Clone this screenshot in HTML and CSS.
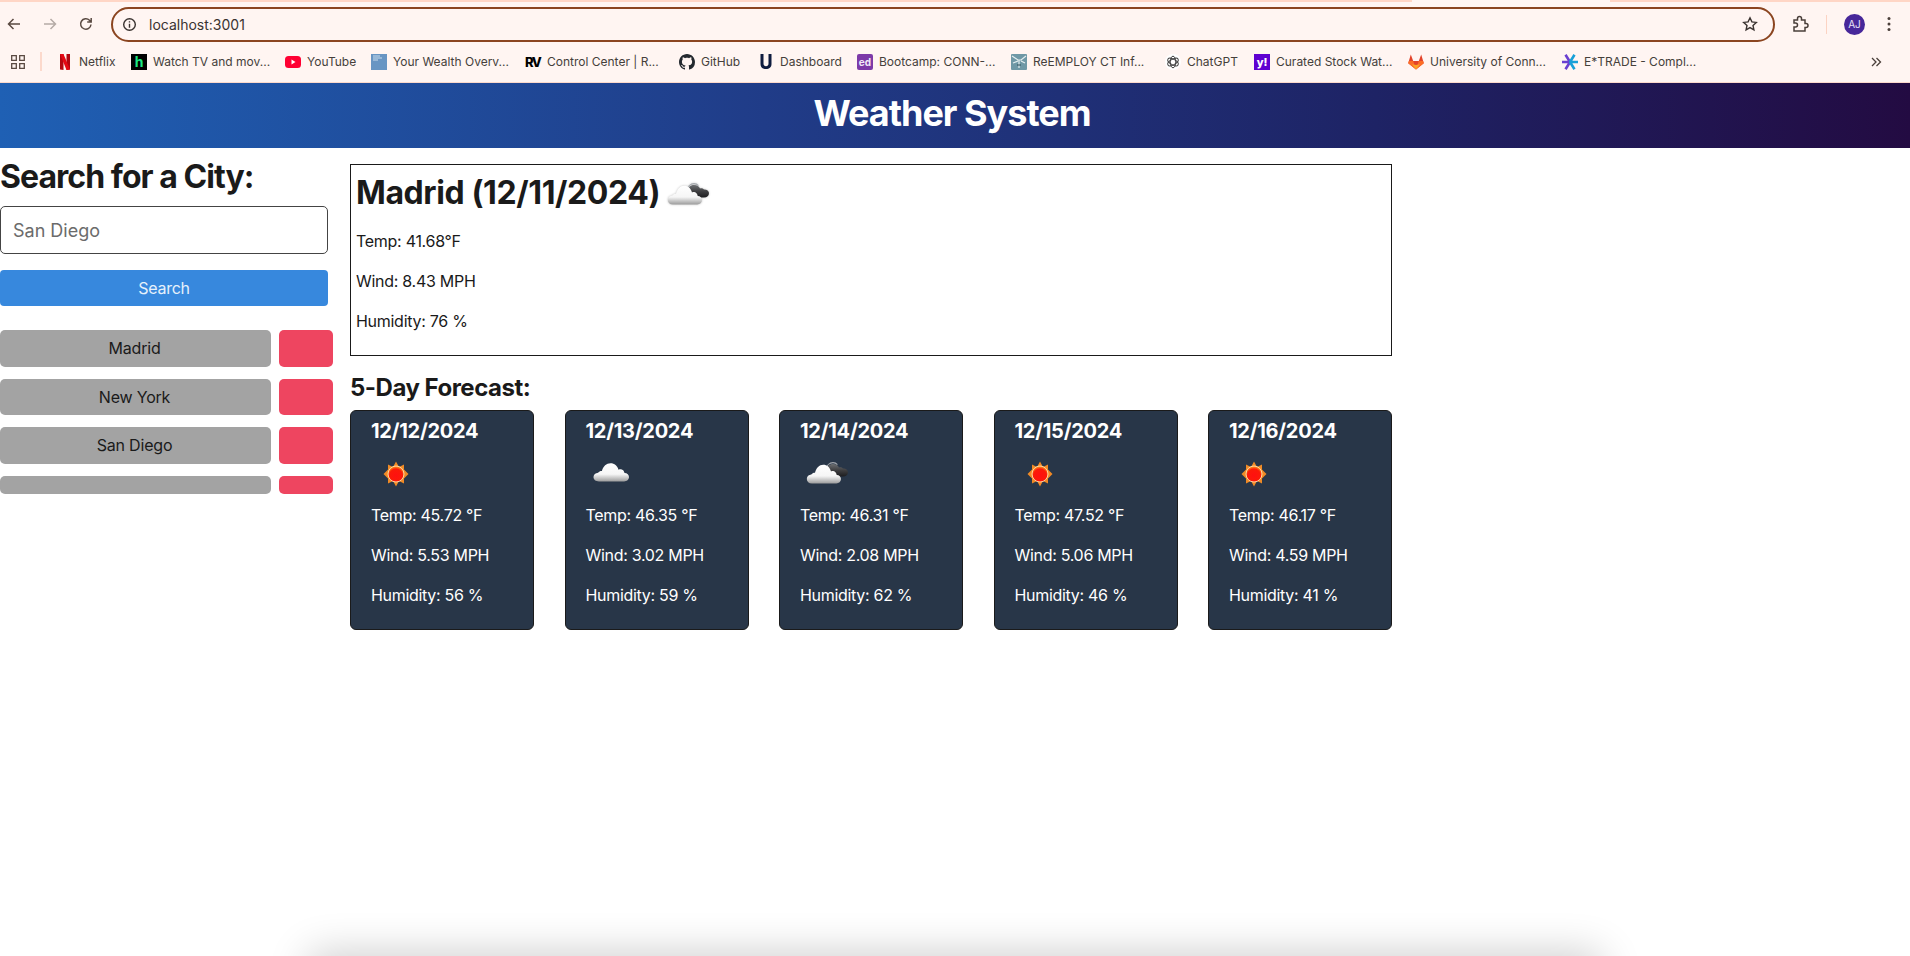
FILE: index.html
```html
<!DOCTYPE html>
<html lang="en">
<head>
    <meta charset="UTF-8" />
    <meta name="viewport" content="width=device-width, initial-scale=1" />
    <title>Weather System</title>
    <link rel="stylesheet" href="styles.css">
</head>
<body>
    <svg class="defs" aria-hidden="true">
        <defs>
            <linearGradient id="whiteCloud" x1="0" y1="0" x2="0" y2="1">
                <stop offset="0" stop-color="#ffffff" />
                <stop offset="0.6" stop-color="#f6f6f6" />
                <stop offset="1" stop-color="#9c9c9c" />
            </linearGradient>
            <linearGradient id="darkCloud" x1="0" y1="0" x2="0" y2="1">
                <stop offset="0" stop-color="#6d6f72" />
                <stop offset="0.5" stop-color="#3f3f41" />
                <stop offset="1" stop-color="#1d1d1f" />
            </linearGradient>
            <radialGradient id="sunDisc" cx="0.5" cy="0.6" r="0.55">
                <stop offset="0" stop-color="#ff1010" />
                <stop offset="0.75" stop-color="#fb1a08" />
                <stop offset="1" stop-color="#ff8a1a" />
            </radialGradient>
            <symbol id="sun" viewBox="0 0 50 50">
                <polygon fill="#f08a25" points="25,12.5 28,18 33,15.5 33,20.5 37.5,25 33,29.5 33,34.5 28,32 25,37.5 22,32 17,34.5 17,29.5 12.5,25 17,20.5 17,15.5 22,18" />
                <circle cx="25" cy="25" r="8" fill="url(#sunDisc)" stroke="#ffe0b0" stroke-width="0.9" />
            </symbol>
            <symbol id="cloud" viewBox="0 0 50 50">
                <path fill="url(#whiteCloud)" d="M13 32.500c-3.400 0-5.500-1.800-5.500-4.400 0-2.500 2-4.300 4.600-4.400 1-1.300 2.300-1.900 3.800-1.800 1.300-4.700 4.500-7.600 8.600-7.600 4 0 6.900 2.500 8 6.400 1-.5 2.200-.6 3.200-.2 1.600.5 2.600 1.900 2.800 3.600 2.500-.1 4.500 1.700 4.500 4 0 2.700-2.200 4.400-4.900 4.400z" />
            </symbol>
            <symbol id="overcast" viewBox="0 0 50 50">
                <path fill="none" stroke="#a4a8ad" stroke-width="1.200" d="M26 20.500c.6-4 3.400-6.800 7-6.800 1.800 0 3.300.7 4.400 1.900" />
                <path fill="url(#darkCloud)" d="M29 27.500c-3 0-4-3-3-6 .8-4 3.500-6.500 7-6.500 3 0 5 1.200 6 3.500 1.500-.5 3-.2 4 .9 2.600-.2 5 1.300 5 3.600 0 2.800-2 4.500-5 4.500z" />
                <path fill="url(#whiteCloud)" d="M12 34.500c-3.200 0-5.200-1.900-5.200-4.500 0-2.600 2-4.400 4.500-4.500 1-1.300 2.200-1.900 3.700-1.800 1.200-5 4.300-8 8.200-8 3.900 0 6.700 2.600 7.800 6.700 1-.5 2.100-.6 3-.2 1.500.5 2.500 2 2.700 3.800 2.400-.1 4.300 1.800 4.300 4.100 0 2.700-2.100 4.400-4.700 4.400z" />
            </symbol>
        </defs>
    </svg>

    <div class="browser-top">
        <div class="tab-strip"></div>
        <div class="toolbar">
            <svg class="tool-icon" viewBox="0 0 16 16"><path d="M14 8H3M7.500 3 2.500 8l5 5" /></svg>
            <svg class="tool-icon tool-icon-off" viewBox="0 0 16 16"><path d="M2 8h11M8.500 3l5 5-5 5" /></svg>
            <svg class="tool-icon" viewBox="0 0 16 16"><path d="M13 8.500A5.200 5.200 0 1 1 11.500 4.300L13.200 6M13.200 2v4h-4" /></svg>
            <div class="address-bar">
                <svg class="info-icon" viewBox="0 0 16 16"><circle cx="8" cy="8" r="6.200" /><path d="M8 7.200V11.500M8 4.500v1.300" /></svg>
                <span class="address-text">localhost:3001</span>
                <svg class="star-icon" viewBox="0 0 16 16"><path d="m8 1.800 1.900 4.100 4.400.5-3.300 3 .9 4.400L8 11.600l-3.900 2.200.9-4.400-3.300-3 4.400-.5z" /></svg>
            </div>
            <svg class="ext-icon" viewBox="0 0 18 18"><path d="M3 5h3.500V3.500a2 2 0 0 1 4 0V5H14v3.500h1a2 2 0 0 1 0 4h-1V16H3v-4h1.500a2 2 0 0 0 0-4H3z" /></svg>
            <span class="tool-sep"></span>
            <span class="avatar">AJ</span>
            <svg class="menu-icon" viewBox="0 0 4 16"><circle cx="2" cy="2.500" r="1.500" /><circle cx="2" cy="8" r="1.500" /><circle cx="2" cy="13.500" r="1.500" /></svg>
        </div>
        <div class="bookmarks">
            <svg class="apps-icon" viewBox="0 0 14 14"><path d="M.7.700h4.600v4.600H.7zM8.700.700h4.600v4.600H8.700zM.7 8.700h4.600v4.600H.7zM8.700 8.700h4.600v4.600H8.700z" /></svg>
            <span class="bookmark-sep"></span>
            <div class="bookmark-list">
                <a class="bookmark"><svg class="fav" viewBox="0 0 16 16"><path fill="#b20710" d="M3 0h3.500v16L3 15.500zM9.500 0H13v15.500L9.500 16z" /><path fill="#e50914" d="M3 0h3.500l6.500 15.500-3.500.5z" /></svg><span class="label">Netflix</span></a>
                <a class="bookmark"><span class="fav fav-hulu">h</span><span class="label">Watch TV and mov...</span></a>
                <a class="bookmark"><svg class="fav" viewBox="0 0 16 16"><rect y="2" width="16" height="12" rx="3.500" fill="#ff0033" /><path fill="#fff" d="m6.500 5.500 4 2.500-4 2.500z" /></svg><span class="label">YouTube</span></a>
                <a class="bookmark"><svg class="fav" viewBox="0 0 16 16"><rect width="16" height="16" fill="#6895c3" /><path stroke="#c9dcec" stroke-width="1" d="M2 2h7M2 4h9M2 6h5" /></svg><span class="label">Your Wealth Overv...</span></a>
                <a class="bookmark"><span class="fav fav-rv">RV</span><span class="label">Control Center | R...</span></a>
                <a class="bookmark"><svg class="fav" viewBox="0 0 16 16"><path fill="#24292f" d="M8 0C3.580 0 0 3.580 0 8c0 3.540 2.290 6.530 5.470 7.590.4.070.55-.17.55-.38 0-.19-.01-.82-.01-1.490-2.010.37-2.530-.49-2.690-.94-.09-.23-.48-.94-.82-1.130-.28-.15-.68-.52-.01-.53.63-.01 1.080.58 1.230.82.72 1.210 1.870.87 2.330.66.070-.52.28-.87.51-1.070-1.780-.2-3.640-.89-3.640-3.950 0-.87.31-1.590.82-2.150-.08-.2-.36-1.020.08-2.120 0 0 .67-.21 2.200.82.64-.18 1.320-.27 2-.27.68 0 1.360.09 2 .27 1.530-1.040 2.200-.82 2.200-.82.44 1.100.16 1.920.08 2.120.51.56.82 1.270.82 2.150 0 3.070-1.870 3.750-3.650 3.950.29.25.54.73.54 1.480 0 1.070-.01 1.930-.01 2.200 0 .21.15.46.55.38A8.013 8.013 0 0 0 16 8c0-4.420-3.580-8-8-8z" /></svg><span class="label">GitHub</span></a>
                <a class="bookmark"><svg class="fav" viewBox="0 0 16 16"><path fill="#0f1c3f" d="M2.500 0h3v9.500c0 1.800 1 2.700 2.500 2.700s2.500-.9 2.500-2.700V0h3v10c0 3.400-2.300 5-5.500 5s-5.500-1.600-5.500-5z" /></svg><span class="label">Dashboard</span></a>
                <a class="bookmark"><span class="fav fav-ed">ed</span><span class="label">Bootcamp: CONN-...</span></a>
                <a class="bookmark"><svg class="fav" viewBox="0 0 16 16"><rect width="16" height="16" rx="1" fill="#6f98a6" /><path stroke="#e4eef0" stroke-width="1.200" fill="none" d="M1 2l6 4h3l5-4M8 6v8M2 9l5-2M14 9l-4-2" /><path stroke="#2d4c58" d="M6 11h4" /></svg><span class="label">ReEMPLOY CT Inf...</span></a>
                <a class="bookmark"><svg class="fav fav-gpt" viewBox="0 0 16 16"><circle cx="8" cy="8" r="8" fill="#fff" /><g fill="none" stroke="#3f3f3f" stroke-width="1"><ellipse cx="8" cy="8" rx="2.800" ry="5.800" /><ellipse cx="8" cy="8" rx="2.800" ry="5.800" transform="rotate(60 8 8)" /><ellipse cx="8" cy="8" rx="2.800" ry="5.800" transform="rotate(120 8 8)" /></g></svg><span class="label">ChatGPT</span></a>
                <a class="bookmark"><span class="fav fav-yahoo">y!</span><span class="label">Curated Stock Wat...</span></a>
                <a class="bookmark"><svg class="fav" viewBox="0 0 16 16"><path fill="#e24329" d="M8 15.500 .2 9.300 2.800 .5l2.400 6.500h5.600l2.400-6.500 2.600 8.800z" /><path fill="#fc6d26" d="M8 15.500 5.200 7H.9L.2 9.300zM8 15.500l2.800-8.500h4.300l.7 2.300z" /><path fill="#fca326" d="M8 15.500 4 10.300l4 .7 4-.7z" /></svg><span class="label">University of Conn...</span></a>
                <a class="bookmark"><svg class="fav" viewBox="0 0 16 16"><path fill="none" stroke="#6a3fd0" stroke-width="2.600" d="M8 8 3.500.8M8 8l-4.500 7.200M0 8h8" /><path fill="none" stroke="#18a0d8" stroke-width="2.600" d="M8 8l4.500-7.200M8 8l4.500 7.200M8 8h8" /></svg><span class="label">E*TRADE - Compl...</span></a>
            </div>
            <svg class="more-icon" viewBox="0 0 12 12"><path d="m2 2 4 4-4 4M6.500 2l4 4-4 4" /></svg>
        </div>
    </div>

    <header class="page-header">
        <h1>Weather System</h1>
    </header>

    <div class="content">
        <aside class="sidebar">
            <h2>Search for a City:</h2>
            <input class="city-input" type="text" placeholder="San Diego" />
            <button class="search-btn">Search</button>
            <div class="history">
                <div class="history-row"><button class="city-btn">Madrid</button><button class="delete-btn"></button></div>
                <div class="history-row"><button class="city-btn">New York</button><button class="delete-btn"></button></div>
                <div class="history-row"><button class="city-btn">San Diego</button><button class="delete-btn"></button></div>
                <div class="history-row history-row-empty"><button class="city-btn"></button><button class="delete-btn"></button></div>
            </div>
        </aside>

        <main class="results">
            <section class="today">
                <h2>Madrid (12/11/2024)<svg class="today-icon"><use href="#overcast" /></svg></h2>
                <p>Temp: 41.68°F</p>
                <p>Wind: 8.43 MPH</p>
                <p>Humidity: 76 %</p>
            </section>

            <h3 class="forecast-title">5-Day Forecast:</h3>
            <div class="forecast">
                <div class="card">
                    <h4>12/12/2024</h4>
                    <svg class="card-icon"><use href="#sun" /></svg>
                    <p>Temp: 45.72 °F</p>
                    <p>Wind: 5.53 MPH</p>
                    <p>Humidity: 56 %</p>
                </div>
                <div class="card">
                    <h4>12/13/2024</h4>
                    <svg class="card-icon"><use href="#cloud" /></svg>
                    <p>Temp: 46.35 °F</p>
                    <p>Wind: 3.02 MPH</p>
                    <p>Humidity: 59 %</p>
                </div>
                <div class="card">
                    <h4>12/14/2024</h4>
                    <svg class="card-icon"><use href="#overcast" /></svg>
                    <p>Temp: 46.31 °F</p>
                    <p>Wind: 2.08 MPH</p>
                    <p>Humidity: 62 %</p>
                </div>
                <div class="card">
                    <h4>12/15/2024</h4>
                    <svg class="card-icon"><use href="#sun" /></svg>
                    <p>Temp: 47.52 °F</p>
                    <p>Wind: 5.06 MPH</p>
                    <p>Humidity: 46 %</p>
                </div>
                <div class="card">
                    <h4>12/16/2024</h4>
                    <svg class="card-icon"><use href="#sun" /></svg>
                    <p>Temp: 46.17 °F</p>
                    <p>Wind: 4.59 MPH</p>
                    <p>Humidity: 41 %</p>
                </div>
            </div>
        </main>
    </div>

    <div class="window-shadow"></div>
</body>
</html>
```

FILE: styles.css
```css
* { box-sizing: border-box; }
html, body { height: 100%; }
body { position: relative; margin: 0; overflow: hidden; background: #fff; color: #1a1a1a; font-family: Inter, "Liberation Sans", sans-serif; }
.defs { position: absolute; width: 0; height: 0; }

/* browser chrome */
.browser-top { height: 83px; background: #fff5f2; border-bottom: 1px solid #fcd9cc; }
.tab-strip { height: 2px; background: linear-gradient(90deg, #ffd6c6 1412px, #fff5f2 1412px, #fff5f2 1610px, #ffd6c6 1610px); }
.toolbar { display: flex; align-items: center; height: 46px; padding: 0 0 2px 6px; }
.tool-icon { width: 16px; height: 16px; margin-right: 20px; fill: none; stroke: #5a4a42; stroke-width: 1.500; }
.tool-icon-off { stroke: #b5aba6; }
.address-bar { display: flex; align-items: center; width: 1664px; height: 35px; margin-left: -3px; padding: 0 15px 0 9px; border: 2px solid #8b4520; border-radius: 18px; }
.info-icon { width: 15px; height: 15px; fill: none; stroke: #3a3330; stroke-width: 1.500; }
.address-text { flex: 1; margin-left: 12px; font-size: 14px; color: #3a3330; }
.star-icon { width: 16px; height: 16px; fill: none; stroke: #3a3330; stroke-width: 1.400; }
.ext-icon { width: 18px; height: 18px; margin-left: 16px; fill: none; stroke: #4a3f3a; stroke-width: 1.500; }
.tool-sep { width: 1px; height: 19px; margin-left: 17px; background: #fcd3c3; }
.avatar { display: flex; align-items: center; justify-content: center; width: 21px; height: 21px; margin-left: 17px; border-radius: 50%; background: #47279a; color: #e9e4f7; font-size: 10px; }
.menu-icon { width: 4px; height: 16px; margin-left: 22px; fill: #4a3f3a; }

.bookmarks { display: flex; align-items: center; height: 34px; padding: 0 0 7px 11px; }
.apps-icon { width: 14px; height: 14px; fill: none; stroke: #5a4a42; stroke-width: 1.300; }
.bookmark-sep { width: 2px; height: 19px; margin-left: 15px; background: #fcd9cc; }
.bookmark-list { display: grid; grid-template-columns: 74px 154px 86px 154px 154px 79px 99px 154px 154px 89px 154px 154px 150px; margin-left: 15px; }
.bookmark { display: flex; align-items: center; gap: 6px; font-size: 12px; color: #453f3b; white-space: nowrap; }
.fav { display: block; flex: none; width: 16px; height: 16px; }
.label { display: block; }
.fav-hulu { background: #000; color: #1ce783; font-size: 14px; font-weight: 700; line-height: 16px; text-align: center; }
.fav-rv { color: #000; font-size: 13px; font-weight: 800; letter-spacing: -1.500px; line-height: 16px; }
.fav-ed { border-radius: 2px; background: #7d3aa8; color: #f1e8f7; font-size: 10px; font-weight: 700; line-height: 16px; text-align: center; }
.fav-yahoo { background: #5f01d1; color: #fff; font-size: 11px; font-weight: 800; line-height: 16px; text-align: center; }
.more-icon { width: 12px; height: 12px; margin-left: 158px; fill: none; stroke: #4a3f3a; stroke-width: 1.300; }

/* page header */
.page-header { display: flex; align-items: center; justify-content: center; height: 65px; padding: 0 6px 6px 0; background: linear-gradient(90deg, #1f60b4, #203c88 40%, #1e2365 72%, #230b42); }
.page-header h1 { margin: 0; font-size: 36px; font-weight: 700; letter-spacing: -1px; color: #fff; }

.content { display: flex; align-items: flex-start; gap: 16px; padding-top: 10px; }

/* sidebar */
.sidebar { display: flex; flex-direction: column; width: 334px; flex: none; }
.sidebar h2 { margin: 0 0 10px; font-size: 32px; line-height: 38px; font-weight: 700; letter-spacing: -0.950px; }
.city-input { width: 328px; height: 48px; padding: 0 12px; border: 1px solid #444; border-radius: 5px; font: 18px Inter, sans-serif; }
.city-input::placeholder { color: #6b6b6b; opacity: 1; }
.search-btn { width: 328px; height: 36px; margin-top: 16px; border: 0; border-radius: 4px; background: #3788dd; color: #e6f1fb; font: 16px Inter, sans-serif; letter-spacing: -0.250px; }
.history { margin-top: 24px; }
.history-row { display: flex; gap: 8px; height: 36.6px; margin-bottom: 12px; }
.history-row-empty { height: 18px; }
.city-btn { width: 271px; padding: 0 8px 0 6px; border: 0; border-radius: 5px; background: #a3a3a3; color: #1a1a1a; font: 16px Inter, sans-serif; letter-spacing: -0.200px; }
.delete-btn { width: 54px; border: 0; border-radius: 5px; background: #ee4560; }

/* current weather */
.results { width: 1042px; margin-top: 6px; }
.today { padding: 7px 5px 6px; border: 1px solid #1a1a1a; }
.today h2 { display: flex; align-items: center; gap: 1px; height: 42px; margin: 0 0 15px; font-size: 32px; line-height: 42px; font-weight: 700; letter-spacing: -0.400px; }
.today-icon { width: 50px; height: 50px; margin-top: 4px; flex: none; filter: drop-shadow(0 0 1px #c4c4c4); }
.today p { margin: 0 0 16px; font-size: 16px; line-height: 24px; letter-spacing: -0.280px; }

/* forecast */
.forecast-title { margin: 17px 0 8px; font-size: 24px; line-height: 29px; font-weight: 700; letter-spacing: -0.500px; }
.forecast { display: flex; justify-content: space-between; }
.card { width: 184px; padding: 8px 20px 6px; border: 1px solid #1a1a1a; border-radius: 6px; background: #283648; color: #fff; }
.card h4 { margin: 0; font-size: 20px; line-height: 24px; font-weight: 700; letter-spacing: -0.250px; }
.card-icon { display: block; width: 50px; height: 50px; margin: 6px 0 4px; }
.card p { margin: 0 0 16px; font-size: 16px; line-height: 24px; letter-spacing: -0.300px; }

/* shadow of the window below */
.window-shadow { position: absolute; left: 312px; top: 956px; width: 1286px; height: 40px; box-shadow: 0 0 42px 3px rgba(0, 0, 0, 0.2); }
```
